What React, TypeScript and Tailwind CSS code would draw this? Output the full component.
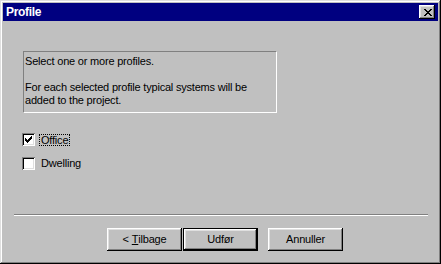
import React from 'react'

const font = { fontFamily: '"Liberation Sans", Arial, sans-serif' }

const raised =
  'shadow-[inset_-1px_-1px_0_#000,inset_1px_1px_0_#fff,inset_-2px_-2px_0_#808080,inset_2px_2px_0_#dfdfdf]'

// pixel X for the title bar close button (8x7)
const CloseGlyph = () => {
  const rects = []
  for (let i = 0; i < 7; i++) {
    rects.push(<rect key={'a' + i} x={i} y={i} width={2} height={1} />)
    rects.push(<rect key={'b' + i} x={6 - i} y={i} width={2} height={1} />)
  }
  return (
    <svg width="8" height="7" viewBox="0 0 8 7" fill="#000" shapeRendering="crispEdges">
      {rects}
    </svg>
  )
}

// 7x7 check mark
const checkRows = ['......X', '.....XX', 'X...XXX', 'XX.XXX.', 'XXXXX..', '.XXX...', '..X....']

const CheckGlyph = () => (
  <svg width="7" height="7" viewBox="0 0 7 7" fill="#000" shapeRendering="crispEdges">
    {checkRows.flatMap((row, y) =>
      row.split('').map((c, x) => (c === 'X' ? <rect key={`${x}-${y}`} x={x} y={y} width={1} height={1} /> : null))
    )}
  </svg>
)

const CheckBox = ({ checked }: { checked?: boolean }) => (
  <div className="w-[13px] h-[13px] bg-white flex items-center justify-center shadow-[inset_1px_1px_0_#808080,inset_-1px_-1px_0_#fff,inset_2px_2px_0_#000,inset_-2px_-2px_0_#dfdfdf]">
    {checked && <CheckGlyph />}
  </div>
)

const Button = ({ children, isDefault }: { children: React.ReactNode; isDefault?: boolean }) => (
  <div className={`w-[75px] h-[23px] ${isDefault ? 'border border-black' : ''}`}>
    <div className={`w-full h-full bg-[#c0c0c0] flex items-center justify-center text-[11px] text-black ${raised}`}>
      {children}
    </div>
  </div>
)

export default function App() {
  return (
    <div
      style={font}
      className="w-[441px] h-[264px] bg-[#c0c0c0] p-[3px] flex flex-col shadow-[inset_-1px_-1px_0_#000,inset_1px_1px_0_#dfdfdf,inset_-2px_-2px_0_#808080,inset_2px_2px_0_#fff]"
    >
      <div className="h-[18px] bg-[#000080] flex items-center justify-between pl-[3px] pr-[3px]">
        <span className="text-white font-bold text-[12px] tracking-[-0.3px] leading-none">Profile</span>
        <div className={`w-[16px] h-[14px] bg-[#c0c0c0] flex items-center justify-center pl-[1px] ${raised}`}>
          <CloseGlyph />
        </div>
      </div>

      <div className="flex flex-col text-[11px] leading-[13px] tracking-[-0.2px] text-black">
        <div className="mt-[30px] ml-[20px] w-[254px] h-[62px] border border-t-[#808080] border-l-[#808080] border-b-white border-r-white pl-[1px] pt-[3px]">
          <div>Select one or more profiles.</div>
          <div className="mt-[13px]">For each selected profile typical systems will be</div>
          <div>added to the project.</div>
        </div>

        <div className="mt-[20px] ml-[19px] flex flex-col gap-[11px]">
          <div className="flex items-center h-[13px]">
            <CheckBox checked />
            <span className="ml-[4px] px-[1px] border border-dotted border-black leading-[10px] h-[12px]">Office</span>
          </div>
          <div className="flex items-center h-[13px]">
            <CheckBox />
            <span className="ml-[5px] px-[1px]">Dwelling</span>
          </div>
        </div>

        <div className="mt-[44px] ml-[11px] w-[414px] h-[2px] border-t border-t-[#808080] border-b border-b-white" />

        <div className="mt-[12px] ml-[104px] flex">
          <Button>
            &lt; <span className="underline ml-[3px]">T</span>ilbage
          </Button>
          <div className="ml-[1px]">
            <Button isDefault>Udfør</Button>
          </div>
          <div className="ml-[10px]">
            <Button>Annuller</Button>
          </div>
        </div>
      </div>
    </div>
  )
}
